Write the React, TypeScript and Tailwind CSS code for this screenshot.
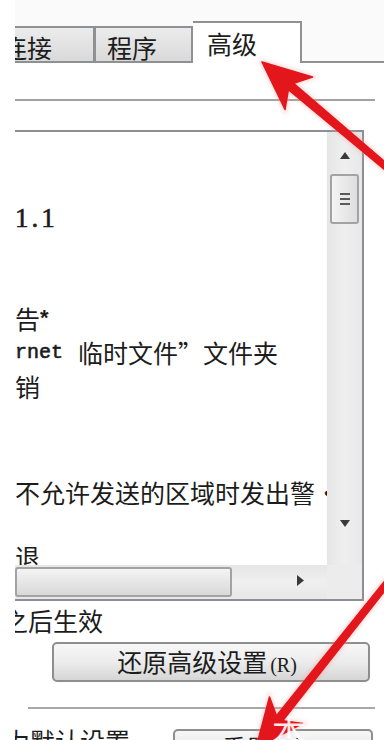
import React from "react";

const cjk = "font-['Noto_Sans_CJK_SC','Noto_Sans_CJK_JP',sans-serif]";

function Grip() {
  return (
    <div className="flex flex-col gap-[3px] items-center">
      <div className="w-[10px] h-[2px] bg-[#5a5a5a]" />
      <div className="w-[10px] h-[2px] bg-[#5a5a5a]" />
      <div className="w-[10px] h-[2px] bg-[#5a5a5a]" />
    </div>
  );
}

function Arrows() {
  const a1 =
    "262,62 312.5,77 293.6,83.4 397.6,172.7 393.8,177.3 288.4,89.6 285,109.5";
  const a2 =
    "256,748 302.5,723.5 282.7,720.7 392.1,581.6 387.3,577.8 276.5,715.7 269.5,697";
  return (
    <svg
      className="absolute inset-0 pointer-events-none"
      width="384"
      height="740"
      viewBox="0 0 384 740"
    >
      <defs>
        <filter id="soft" x="-20%" y="-20%" width="140%" height="140%">
          <feGaussianBlur stdDeviation="2.2" />
        </filter>
        <filter id="edge" x="-20%" y="-20%" width="140%" height="140%">
          <feGaussianBlur stdDeviation="0.6" />
        </filter>
      </defs>
      <g filter="url(#soft)" opacity="0.45">
        <polygon points={a1} fill="#f08080" stroke="#f4a0a0" strokeWidth="4" />
        <polygon points={a2} fill="#f08080" stroke="#f4a0a0" strokeWidth="4" />
      </g>
      <g filter="url(#edge)">
        <polygon points={a1} fill="#e3141b" stroke="#e3141b" strokeWidth="1.5" strokeLinejoin="round" />
        <polygon points={a2} fill="#e3141b" stroke="#e3141b" strokeWidth="1.5" strokeLinejoin="round" />
      </g>
    </svg>
  );
}

export default function App() {
  return (
    <div className={`relative w-[384px] h-[740px] overflow-hidden bg-white text-[#1c1c1c] ${cjk}`}>
      <div className="pl-[15px] h-full">
        <div className="h-full overflow-hidden flex flex-col">
          {/* tab strip */}
          <div className="h-[63px] shrink-0 flex items-end bg-[#fafafa]">
            <div className="w-[80px] h-[37px] shrink-0 overflow-hidden border-t-2 border-r-2 border-b-2 border-[#8f9092] bg-gradient-to-b from-[#ececec] to-[#d9d9d9] flex items-center">
              <span className="ml-[-13px] text-[25px] leading-none whitespace-nowrap pt-[5px]">连接</span>
            </div>
            <div className="w-[98px] h-[37px] shrink-0 border-t-2 border-r-2 border-b-2 border-l border-[#8f9092] bg-gradient-to-b from-[#ececec] to-[#d9d9d9] flex items-center">
              <span className="pl-[11px] text-[25px] leading-none whitespace-nowrap pt-[5px]">程序</span>
            </div>
            <div className="w-[109px] h-[42px] shrink-0 border-t-2 border-r-2 border-[#8f9092] bg-white flex items-center">
              <span className="pl-[14px] text-[25px] leading-none whitespace-nowrap">高级</span>
            </div>
            <div className="flex-1 border-b-2 border-[#8f9092]" />
          </div>

          {/* panel */}
          <div className="flex flex-col bg-white flex-1">
            <div className="h-[36px] shrink-0" />
            <div className="w-[360px] h-[2px] bg-[#a2a2a2] shrink-0" />
            <div className="h-[29px] shrink-0" />

            {/* listbox */}
            <div className="w-[349px] h-[471px] shrink-0 border-t-2 border-r-2 border-b-2 border-[#8d8f94] flex flex-col">
              <div className="flex h-[433px]">
                <div className="flex-1 overflow-hidden flex flex-col pt-[69px]">
                  <div className="h-[34px] flex items-center shrink-0">
                    <span className="font-['Liberation_Serif',serif] text-[27px] tracking-[3px] leading-none [-webkit-text-stroke:0.6px_#1c1c1c]">1.1</span>
                  </div>
                  <div className="h-[66px] shrink-0" />
                  <div className="h-[34px] flex items-center shrink-0 whitespace-nowrap text-[25px] leading-none">
                    <span>告</span>
                    <span className="font-['Liberation_Sans',sans-serif] text-[22px] font-bold">*</span>
                  </div>
                  <div className="h-[35px] flex items-center shrink-0 whitespace-nowrap text-[25px] leading-none">
                    <span className="font-['Liberation_Mono',monospace] text-[20px] [-webkit-text-stroke:0.6px_#1c1c1c]">rnet</span>
                    <span className="ml-[15px]">临时文件</span>
                    <span>”</span>
                    <span>文件夹</span>
                  </div>
                  <div className="h-[33px] flex items-center shrink-0 whitespace-nowrap text-[25px] leading-none">销</div>
                  <div className="h-[72px] shrink-0" />
                  <div className="h-[34px] flex items-center shrink-0 whitespace-nowrap text-[25px] leading-none">不允许发送的区域时发出警·</div>
                  <div className="h-[30px] shrink-0" />
                  <div className="h-[34px] flex items-center shrink-0 whitespace-nowrap text-[25px] leading-none">退</div>
                </div>
                {/* vertical scrollbar */}
                <div className="w-[35px] shrink-0 bg-gradient-to-r from-[#e6e6e6] via-[#efefef] to-[#e8e8e8] flex flex-col items-center">
                  <div className="h-[42px] w-full flex items-center justify-center pt-[4px]">
                    <svg width="10" height="7" viewBox="0 0 10 7">
                      <polygon points="5,0 10,7 0,7" fill="#3a3a3a" />
                    </svg>
                  </div>
                  <div className="w-[29px] h-[50px] rounded-[3px] border-2 border-[#a3a3a3] bg-gradient-to-r from-[#f4f4f4] to-[#dedede] flex items-center justify-center">
                    <Grip />
                  </div>
                  <div className="flex-1" />
                  <div className="h-[50px] w-full flex items-start justify-center pt-[5px]">
                    <svg width="10" height="7" viewBox="0 0 10 7">
                      <polygon points="0,0 10,0 5,7" fill="#3a3a3a" />
                    </svg>
                  </div>
                </div>
              </div>
              {/* horizontal scrollbar */}
              <div className="flex flex-1 bg-gradient-to-b from-[#e6e6e6] via-[#efefef] to-[#e8e8e8]">
                <div className="flex-1 flex items-center">
                  <div className="w-[217px] h-[30px] rounded-[3px] border-2 border-[#a3a3a3] bg-gradient-to-b from-[#f4f4f4] to-[#d9d9d9]" />
                  <div className="flex-1" />
                  <div className="w-[30px] flex items-center justify-start mb-[4px]">
                    <svg width="7" height="11" viewBox="0 0 7 11">
                      <polygon points="0,0 7,5.5 0,11" fill="#3a3a3a" />
                    </svg>
                  </div>
                </div>
                <div className="w-[35px] shrink-0 bg-[#ececec]" />
              </div>
            </div>

            <div className="h-[38px] shrink-0 flex items-center whitespace-nowrap text-[25px] leading-none">
              <span className="ml-[-12px]">之后生效</span>
            </div>
            <div className="h-[3px] shrink-0" />
            <div className="ml-[37px] w-[318px] h-[40px] shrink-0 rounded-[5px] border-2 border-[#8e8e8e] bg-gradient-to-b from-[#f7f7f7] via-[#ececec] to-[#d6d6d6] flex items-center justify-center">
              <span className="text-[25px] leading-none whitespace-nowrap mr-[8px]">
                还原高级设置
                <span className="font-['Liberation_Serif',serif] text-[20px] ml-[3px]">(R)</span>
              </span>
            </div>
            <div className="h-[25px] shrink-0" />
            <div className="ml-[13px] w-[347px] h-[2px] bg-[#a8a8a8] shrink-0" />
            <div className="h-[14px] shrink-0" />
            <div className="flex items-start shrink-0 h-[40px]">
              <span className="ml-[-10px] text-[25px] leading-none whitespace-nowrap pt-[5px]">为默认设置</span>
              <div className="ml-[43px] w-[200px] h-[40px] mt-[6px] rounded-[5px] border-2 border-[#8e8e8e] bg-gradient-to-b from-[#f7f7f7] to-[#dcdcdc] flex items-start justify-center pt-[4px]">
                <span className="text-[25px] leading-none whitespace-nowrap">重置(S)...</span>
              </div>
            </div>
          </div>
        </div>
      </div>
      <Arrows />
      <div className={`absolute left-[272px] top-[714px] text-[34px] leading-none text-white/90 ${cjk}`}>本</div>
    </div>
  );
}
